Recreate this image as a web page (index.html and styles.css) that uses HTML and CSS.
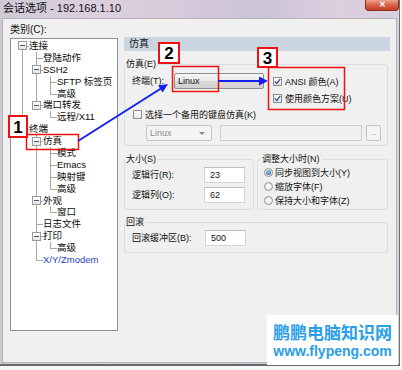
FILE: index.html
```html
<!DOCTYPE html>
<html lang="zh-CN">
<head>
    <meta charset="UTF-8">
    <meta name="viewport" content="width=device-width, initial-scale=1.0">
    <title>会话选项</title>
    <link rel="stylesheet" href="styles.css">
</head>
<body>
    <div class="window">
        <div class="titlebar">
            <span class="title">会话选项 - 192.168.1.10</span>
            <span class="close">✕</span>
        </div>
        <div class="client">
            <div class="left">
                <div class="cat-label">类别(C):</div>
                <div class="tree">
                    <div class="node"><span class="ln bf"><i class="box"></i></span><span class="txt">连接</span></div>
                    <div class="node"><span class="ln v"></span><span class="ln t"></span><span class="txt">登陆动作</span></div>
                    <div class="node"><span class="ln v"></span><span class="ln t"><i class="box"></i></span><span class="txt">SSH2</span></div>
                    <div class="node"><span class="ln v"></span><span class="ln v"></span><span class="ln t"></span><span class="txt">SFTP 标签页</span></div>
                    <div class="node"><span class="ln v"></span><span class="ln v"></span><span class="ln l"></span><span class="txt">高级</span></div>
                    <div class="node"><span class="ln v"></span><span class="ln l"><i class="box"></i></span><span class="txt">端口转发</span></div>
                    <div class="node"><span class="ln v"></span><span class="ln"></span><span class="ln l"></span><span class="txt">远程/X11</span></div>
                    <div class="node"><span class="ln l"><i class="box"></i></span><span class="txt">终端</span></div>
                    <div class="node"><span class="ln"></span><span class="ln t"><i class="box"></i></span><span class="txt">仿真</span></div>
                    <div class="node"><span class="ln"></span><span class="ln v"></span><span class="ln t"></span><span class="txt">模式</span></div>
                    <div class="node"><span class="ln"></span><span class="ln v"></span><span class="ln t"></span><span class="txt">Emacs</span></div>
                    <div class="node"><span class="ln"></span><span class="ln v"></span><span class="ln t"></span><span class="txt">映射键</span></div>
                    <div class="node"><span class="ln"></span><span class="ln v"></span><span class="ln l"></span><span class="txt">高级</span></div>
                    <div class="node"><span class="ln"></span><span class="ln t"><i class="box"></i></span><span class="txt">外观</span></div>
                    <div class="node"><span class="ln"></span><span class="ln v"></span><span class="ln l"></span><span class="txt">窗口</span></div>
                    <div class="node"><span class="ln"></span><span class="ln t"></span><span class="txt">日志文件</span></div>
                    <div class="node"><span class="ln"></span><span class="ln t"><i class="box"></i></span><span class="txt">打印</span></div>
                    <div class="node"><span class="ln"></span><span class="ln v"></span><span class="ln l"></span><span class="txt">高级</span></div>
                    <div class="node"><span class="ln"></span><span class="ln l"></span><span class="txt link">X/Y/Zmodem</span></div>
                </div>
            </div>

            <div class="right">
                <div class="panel-head">仿真</div>

                <div class="group g-emu">
                    <div class="group-title">仿真(E)</div>
                    <div class="emu-row">
                        <span class="lbl lbl-term">终端(T):</span>
                        <span class="combo">Linux</span>
                        <div class="checks">
                            <div class="check"><span class="cb"><svg width="7" height="7" viewBox="0 0 7 7"><path d="M0.8 3.4 L2.8 5.6 L6.3 0.9" fill="none" stroke="#2b4f8c" stroke-width="1.3"/></svg></span>ANSI 颜色(A)</div>
                            <div class="check"><span class="cb"><svg width="7" height="7" viewBox="0 0 7 7"><path d="M0.8 3.4 L2.8 5.6 L6.3 0.9" fill="none" stroke="#2b4f8c" stroke-width="1.3"/></svg></span>使用颜色方案(U)</div>
                        </div>
                    </div>
                    <div class="check alt"><span class="cb"></span>选择一个备用的键盘仿真(K)</div>
                    <div class="alt-row">
                        <span class="combo off">Linux<i class="drop"></i></span>
                        <span class="field off"></span>
                        <span class="dots">...</span>
                    </div>
                </div>

                <div class="size-row">
                    <div class="group g-size">
                        <div class="group-title">大小(S)</div>
                        <div class="field-row first"><span class="lbl lbl-size">逻辑行(R):</span><span class="field">23</span></div>
                        <div class="field-row"><span class="lbl lbl-size">逻辑列(O):</span><span class="field">62</span></div>
                    </div>
                    <div class="group g-resize">
                        <div class="group-title">调整大小时(N)</div>
                        <div class="radio-row"><span class="rd on"></span>同步视图到大小(Y)</div>
                        <div class="radio-row"><span class="rd"></span>缩放字体(F)</div>
                        <div class="radio-row"><span class="rd"></span>保持大小和字体(Z)</div>
                    </div>
                </div>

                <div class="group g-scroll">
                    <div class="group-title">回滚</div>
                    <div class="field-row first"><span class="lbl lbl-size">回滚缓冲区(B):</span><span class="field">500</span></div>
                </div>
            </div>
        </div>
    </div>

    <!-- annotations drawn over the dialog -->
    <svg class="marks" width="402" height="370" viewBox="0 0 402 370">
        <rect x="26.5" y="134.5" width="52" height="15" fill="none" stroke="#ee1111" stroke-width="1.5"/>
        <rect x="172.5" y="66.5" width="46" height="25" fill="none" stroke="#ee1111" stroke-width="1.5"/>
        <rect x="268.5" y="67.5" width="76" height="42" fill="none" stroke="#ee1111" stroke-width="1.5"/>

        <line x1="78" y1="141" x2="161" y2="88.5" stroke="#1420f0" stroke-width="2"/>
        <polygon points="168,84 162.6,92.6 158.2,85.4" fill="#1420f0"/>
        <line x1="218" y1="81" x2="260" y2="81" stroke="#1420f0" stroke-width="2"/>
        <polygon points="268,81 259,76.5 259,85.5" fill="#1420f0"/>

        <rect x="9" y="116" width="18" height="21" fill="#fff" stroke="#ee1111" stroke-width="2"/>
        <text x="18" y="132.5" class="num">1</text>
        <rect x="159" y="43" width="20" height="20" fill="#fff" stroke="#ee1111" stroke-width="2"/>
        <text x="169" y="59" class="num">2</text>
        <rect x="258" y="48" width="19" height="19" fill="#fff" stroke="#ee1111" stroke-width="2"/>
        <text x="267.5" y="63.5" class="num">3</text>
    </svg>

    <div class="watermark">
        <div class="wm-name">鹏鹏电脑知识网</div>
        <div class="wm-url">www.flypeng.com</div>
    </div>
</body>
</html>
```

FILE: styles.css
```css
body {
    margin: 0;
    width: 402px;
    height: 370px;
    overflow: hidden;
    position: relative;
    background: #f7f7f7;
    color: #111;
    font-family: "Liberation Sans", "Noto Sans CJK SC", sans-serif;
    font-size: 9px;
    --lc: #a8a8a8;
}
.window {
    width: 400px;
    height: 366px;
    box-sizing: border-box;
    border-right: 1px solid #707070;
    border-bottom: 2px solid #6a6a6a;
    display: flex;
    flex-direction: column;
    background: linear-gradient(90deg, #cfc9d6, #ddd0de 25%, #d6cadb 45%, #cbc4d6 65%, #dccfe0 85%, #d7d0de);
}
.titlebar {
    height: 18px;
    flex: none;
    display: flex;
    justify-content: space-between;
    align-items: flex-start;
}
.title {
    padding-left: 3px;
    line-height: 16px;
    font-size: 11px;
    color: #111;
}
.close {
    width: 34px;
    height: 11px;
    box-sizing: border-box;
    border: 1px solid #8a2e1c;
    border-top: none;
    border-radius: 0 0 4px 4px;
    background: linear-gradient(#eba38f, #d8634a 50%, #c33c22);
    color: #fff;
    font-size: 8px;
    font-weight: bold;
    line-height: 10px;
    text-align: center;
}
.client {
    flex: 1;
    margin: 0 2px 1px 2px;
    border: 1px solid #b4b4b4;
    background: #f0f0f0;
    display: flex;
}

/* category tree */
.left {
    margin-left: 7px;
    width: 108px;
}
.cat-label {
    margin-top: 5px;
    height: 12px;
    line-height: 12px;
    font-size: 10px;
}
.tree {
    margin-top: 2px;
    height: 293px;
    box-sizing: border-box;
    border: 1px solid #8b9097;
    background: #fff;
    padding: 1px 0 0 4px;
}
.node {
    display: flex;
    height: 11.9px;
    line-height: 12px;
    white-space: nowrap;
    font-size: 9.5px;
}
.ln {
    width: 14px;
    flex: none;
    display: flex;
    align-items: center;
    background-repeat: no-repeat;
}
.v {
    background-image: linear-gradient(var(--lc), var(--lc));
    background-size: 1px 100%;
    background-position: 7px 0;
}
.t {
    background-image: linear-gradient(var(--lc), var(--lc)), linear-gradient(var(--lc), var(--lc));
    background-size: 1px 100%, 7px 1px;
    background-position: 7px 0, 7px 6px;
}
.l {
    background-image: linear-gradient(var(--lc), var(--lc)), linear-gradient(var(--lc), var(--lc));
    background-size: 1px 6px, 7px 1px;
    background-position: 7px 0, 7px 6px;
}
.bf {
    background-image: linear-gradient(var(--lc), var(--lc)), linear-gradient(var(--lc), var(--lc));
    background-size: 1px 100%, 7px 1px;
    background-position: 7px 6px, 7px 6px;
}
.box {
    width: 9px;
    height: 9px;
    margin-left: 3px;
    box-sizing: border-box;
    border: 1px solid #9a9a9a;
    background: linear-gradient(#3a5a8a, #3a5a8a) center / 5px 1px no-repeat, linear-gradient(#fff, #e4e4e4);
}
.txt {
    color: #0a0a0a;
}
.link {
    color: #1e3fc4;
}

/* right panel */
.right {
    margin: 18px 0 0 6px;
    width: 266px;
}
.panel-head {
    height: 14px;
    line-height: 14px;
    padding-left: 5px;
    background: #c9d6e2;
    color: #1a1a1a;
    font-size: 10px;
}
.group {
    border: 1px solid #d6dfe7;
    border-radius: 3px;
    margin-right: 2px;
    padding: 0 6px 0 7px;
}
.group-title {
    width: fit-content;
    height: 12px;
    line-height: 12px;
    margin: -7px 0 0 -7px;
    padding: 0 2px 0 1px;
    background: #f0f0f0;
}
.g-emu {
    margin-top: 13px;
    padding-bottom: 4px;
}
.emu-row {
    display: flex;
    align-items: flex-start;
    margin-top: 3px;
}
.lbl {
    flex: none;
    line-height: 16px;
}
.lbl-term {
    width: 42px;
}
.combo {
    flex: none;
    width: 90px;
    height: 16px;
    box-sizing: border-box;
    border: 1px solid #8e8f8f;
    border-radius: 2px;
    background: linear-gradient(#f6f6f6, #e9e9e9 50%, #dadada 51%, #d0d0d0);
    padding-left: 3px;
    line-height: 14px;
    font-size: 9px;
}
.checks {
    margin-left: 9px;
}
.check {
    display: flex;
    align-items: center;
    height: 17px;
    white-space: nowrap;
}
.cb {
    width: 9px;
    height: 9px;
    flex: none;
    box-sizing: border-box;
    border: 1px solid #8f8f8f;
    background: linear-gradient(#fdfdfd, #e6e6e6);
    margin-right: 3px;
    display: flex;
}
.check.alt {
    height: 14px;
    margin-left: 1px;
}
.alt-row {
    display: flex;
    margin: 4px 0 0 14px;
}
.combo.off {
    width: 66px;
    display: flex;
    justify-content: space-between;
    align-items: center;
    padding-right: 6px;
    border-color: #c5c5c5;
    background: #f4f4f4;
    color: #8d8d8d;
}
.drop {
    border: 3px solid transparent;
    border-top: 3px solid #8a8a8a;
    margin-top: 3px;
}
.field {
    flex: none;
    width: 41px;
    height: 16px;
    box-sizing: border-box;
    border: 1px solid #d2d4d8;
    border-top-color: #b9bcc2;
    background: #fff;
    padding-left: 5px;
    line-height: 14px;
    font-size: 9px;
}
.field.off {
    width: 142px;
    margin-left: 8px;
    background: #f0f0f0;
    border-color: #cfcfcf;
}
.dots {
    flex: none;
    width: 15px;
    height: 16px;
    margin-left: 4px;
    box-sizing: border-box;
    border: 1px solid #c3c3c3;
    border-radius: 2px;
    background: #f4f4f4;
    color: #9a9a9a;
    font-size: 8px;
    line-height: 14px;
    text-align: center;
}

.size-row {
    display: flex;
    gap: 3px;
    margin: 13px 2px 0 0;
}
.size-row .group {
    margin-right: 0;
}
.g-size {
    width: 130px;
    box-sizing: border-box;
    padding-bottom: 6px;
}
.g-resize {
    flex: 1;
    padding: 0 4px 2px 6px;
}
.g-resize .group-title {
    margin-left: -3px;
}
.field-row {
    display: flex;
    align-items: center;
    height: 16px;
    margin-top: 4px;
}
.field-row.first {
    margin-top: 2px;
}
.lbl-size {
    width: 72px;
}
.radio-row {
    display: flex;
    align-items: center;
    height: 14px;
    white-space: nowrap;
}
.rd {
    width: 9px;
    height: 9px;
    flex: none;
    box-sizing: border-box;
    border-radius: 50%;
    border: 1px solid #939393;
    background: radial-gradient(#fff, #dedede);
    margin-right: 2px;
    display: flex;
    align-items: center;
    justify-content: center;
}
.rd.on::after {
    content: "";
    width: 5px;
    height: 5px;
    border-radius: 50%;
    background: radial-gradient(circle at 40% 35%, #9ccaf3, #1e5cae);
}
.g-scroll {
    margin-top: 12px;
    padding-bottom: 6px;
}
.g-scroll .lbl-size {
    width: 73px;
}

/* overlays */
.marks {
    position: absolute;
    top: 0;
    left: 0;
    pointer-events: none;
}
.num {
    font-family: "Liberation Sans", sans-serif;
    font-size: 17px;
    font-weight: bold;
    text-anchor: middle;
    fill: #000;
}
.watermark {
    position: absolute;
    left: 267px;
    top: 315px;
    width: 131px;
    height: 50px;
    background: #fff;
    color: #2a9ee6;
    display: flex;
    flex-direction: column;
    align-items: center;
    justify-content: center;
}
.wm-name {
    font-family: "Noto Sans CJK SC", sans-serif;
    font-size: 17px;
    font-weight: bold;
    line-height: 21px;
}
.wm-url {
    font-family: "Liberation Sans", sans-serif;
    font-size: 14px;
    font-weight: bold;
    line-height: 18px;
}
```
